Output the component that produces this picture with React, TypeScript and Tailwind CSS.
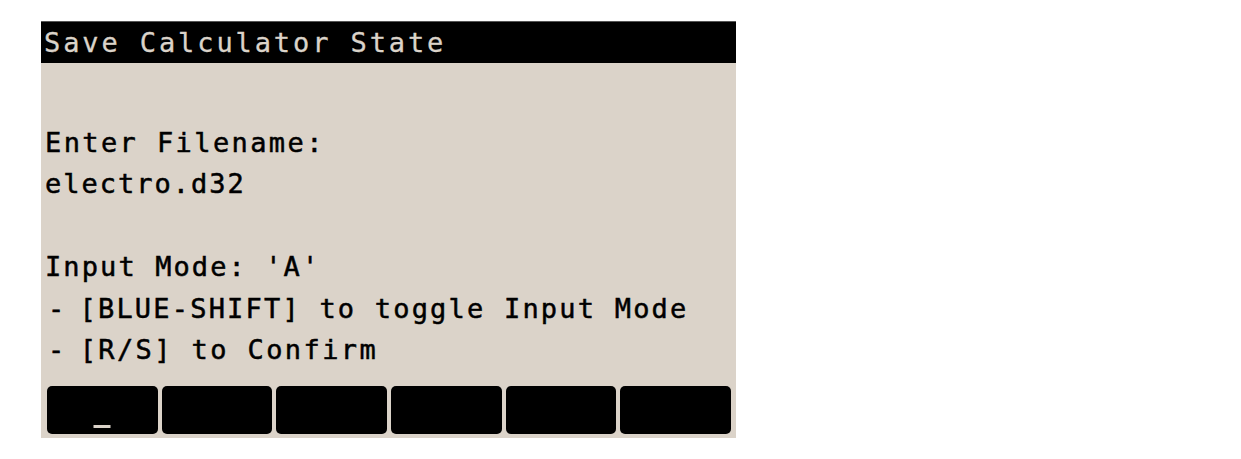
function SoftKey({ label }: { label?: string }) {
  return (
    <div className="relative flex-1 h-[48px] rounded-[5px] bg-black">
      {label === "_" && (
        <div className="absolute left-1/2 bottom-[6px] h-[3px] w-[17px] -translate-x-1/2 bg-[#dbd3c9]" />
      )}
    </div>
  );
}

function Bullet({ children }: { children: string }) {
  return (
    <div className="flex pl-[3px]">
      <span className="mr-[13px]">-</span>
      <span>{children}</span>
    </div>
  );
}

export default function App() {
  const keys = ["_", "", "", "", "", ""];
  return (
    <div className="min-h-screen w-full bg-white pl-[41px] pt-[21px]">
      <div
        className="flex h-[417px] w-[695px] flex-col bg-[#dbd3c9] text-[27px] text-black"
        style={{ fontFamily: '"DejaVu Sans Mono", monospace' }}
      >
        <div className="h-[42px] border-t border-[#555] bg-black pl-[3px] leading-[41px] tracking-[2.9px] text-[#dbd3c9] [-webkit-text-stroke:0.3px_#dbd3c9]">
          Save Calculator State
        </div>

        <div className="mt-[58.5px] pl-[4px] leading-[41.5px] [-webkit-text-stroke:0.5px_black]">
          <div className="tracking-[2.4px]">Enter Filename:</div>
          <div className="tracking-[2px]">electro.d32</div>
          <div>&nbsp;</div>
          <div className="tracking-[2.1px]">Input Mode: 'A'</div>
          <div className="tracking-[2.2px]">
            <Bullet>[BLUE-SHIFT] to toggle Input Mode</Bullet>
          </div>
          <div className="tracking-[2.4px]">
            <Bullet>[R/S] to Confirm</Bullet>
          </div>
        </div>

        <div className="mt-auto flex gap-[4px] pb-[4px] pl-[6px] pr-[5px]">
          {keys.map((k, i) => (
            <SoftKey key={i} label={k} />
          ))}
        </div>
      </div>
    </div>
  );
}
